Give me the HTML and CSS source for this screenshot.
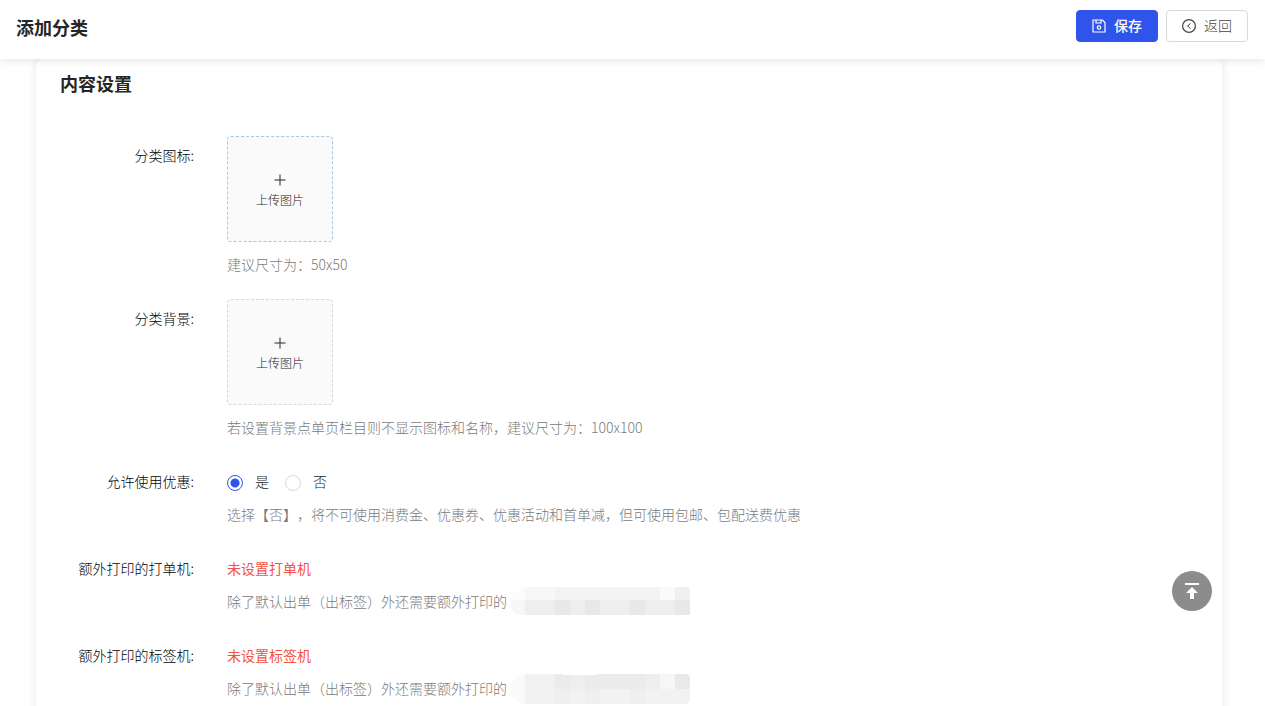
FILE: index.html
```html
<!DOCTYPE html>
<html lang="zh-CN">
<head>
    <meta charset="UTF-8">
    <meta name="viewport" content="width=device-width, initial-scale=1.0">
    <title>添加分类</title>
    <link rel="stylesheet" href="styles.css">
</head>
<body>
    <header class="header">
        <h1>添加分类</h1>
        <div class="actions">
            <button type="submit" form="categoryForm" class="btn btn-primary">
                <svg width="14" height="14" viewBox="0 0 14 14" fill="none" stroke="currentColor" stroke-width="1.200" aria-hidden="true">
                    <path d="M1 1h9.500L13 3.500V13H1zM4 1v3h5V1"/>
                    <circle cx="7" cy="8.500" r="1.700"/>
                </svg>
                <span>保存</span>
            </button>
            <button type="button" class="btn">
                <svg width="14" height="14" viewBox="0 0 14 14" fill="none" stroke="currentColor" aria-hidden="true">
                    <circle cx="7" cy="7" r="6.400" stroke-width="1.200"/>
                    <path d="M8.500 4.500L5.500 7l3 2.500"/>
                </svg>
                <span>返回</span>
            </button>
        </div>
    </header>

    <main class="content">
        <form class="card" id="categoryForm">
            <h2>内容设置</h2>

            <div class="form-item">
                <label class="label" for="iconUpload">分类图标:</label>
                <div class="control">
                    <button type="button" class="upload upload-active" id="iconUpload">
                        <svg width="12" height="12" viewBox="0 0 12 12" stroke="currentColor" aria-hidden="true"><path d="M6 .5v11M.5 6h11"/></svg>
                        <span>上传图片</span>
                    </button>
                    <p class="hint hint-upload">建议尺寸为：50x50</p>
                </div>
            </div>

            <div class="form-item">
                <label class="label" for="bgUpload">分类背景:</label>
                <div class="control">
                    <button type="button" class="upload" id="bgUpload">
                        <svg width="12" height="12" viewBox="0 0 12 12" stroke="currentColor" aria-hidden="true"><path d="M6 .5v11M.5 6h11"/></svg>
                        <span>上传图片</span>
                    </button>
                    <p class="hint hint-upload">若设置背景点单页栏目则不显示图标和名称，建议尺寸为：100x100</p>
                </div>
            </div>

            <div class="form-item">
                <span class="label" id="discountLabel">允许使用优惠:</span>
                <div class="control">
                    <div class="radio-group" role="radiogroup" aria-labelledby="discountLabel">
                        <label class="radio"><input type="radio" name="discount" value="1" checked>是</label>
                        <label class="radio"><input type="radio" name="discount" value="0">否</label>
                    </div>
                    <p class="hint">选择【否】，将不可使用消费金、优惠券、优惠活动和首单减，但可使用包邮、包配送费优惠</p>
                </div>
            </div>

            <div class="form-item">
                <span class="label">额外打印的打单机:</span>
                <div class="control">
                    <div class="warning">未设置打单机</div>
                    <p class="hint">
                        <span>除了默认出单（出标签）外还需要额外打印的</span>
                        <svg class="mosaic" width="180" height="28" viewBox="0 0 180 28" shape-rendering="crispEdges" aria-hidden="true">
                            <path fill="#fcfcfc" d="M15 0v13H0Q3 3 15 0z"/>
                            <path fill="#f7f7f7" d="M0 13h15v15H6Q1 24 0 13z"/>
                            <path fill="#f7f7f7" d="M15 0h30v13H15z"/>
                            <path fill="#f3f3f3" d="M45 0h105v13H45z"/>
                            <path fill="#fafafa" d="M150 0h15v13h-15z"/>
                            <path fill="#f0f0f0" d="M165 0h11l4 1v12h-15z"/>
                            <path fill="#eee" d="M15 13h165v15H15z"/>
                            <path fill="#e8e8e8" d="M45 13h15v15H45zM75 13h15v15H75zM120 13h15v15h-15zM165 13h15v15h-15z"/>
                        </svg>
                    </p>
                </div>
            </div>

            <div class="form-item">
                <span class="label">额外打印的标签机:</span>
                <div class="control">
                    <div class="warning">未设置标签机</div>
                    <p class="hint">
                        <span>除了默认出单（出标签）外还需要额外打印的</span>
                        <svg class="mosaic" width="180" height="32" viewBox="0 -2 180 32" shape-rendering="crispEdges" aria-hidden="true">
                            <path fill="#fafafa" d="M15 0v30Q4 29 1 19V11Q4 2 15 0z"/>
                            <path fill="#f1f1f1" d="M15 0h30v15H15z"/>
                            <path fill="#ebebeb" d="M45 0h7v1h35V0h48v15H45z"/>
                            <path fill="#eee" d="M60 1h15v14H60zM135 0h15v15h-15z"/>
                            <path fill="#f6f6f6" d="M150 0h15v15h-15z"/>
                            <path fill="#e9e9e9" d="M165 0h12l3 2v13h-15z"/>
                            <path fill="#f2f2f2" d="M15 15h165v12l-4 3H15z"/>
                            <path fill="#efefef" d="M45 15h15v15H45zM75 15h15v15H75zM120 15h15v15h-15z"/>
                        </svg>
                    </p>
                </div>
            </div>
        </form>
    </main>

    <button type="button" class="back-top" aria-label="回到顶部">
        <svg width="14" height="16" viewBox="0 0 14 16" fill="currentColor" aria-hidden="true">
            <path d="M0 0h14v2H0zM7 4l6 6H9v6H5v-6H1z"/>
        </svg>
    </button>
</body>
</html>
```

FILE: styles.css
```css
* {
    box-sizing: border-box;
}
body {
    display: flex;
    flex-direction: column;
    height: 100vh;
    margin: 0;
    font-family: "Noto Sans CJK SC", sans-serif;
    font-size: 14px;
    font-weight: 300;
    line-height: 22px;
    text-spacing-trim: space-all;
    color: #000;
    background-color: #fff;
}
h1, h2 {
    margin: 0;
    font-size: 18px;
    font-weight: 700;
    color: #262626;
}
button {
    font-family: inherit;
    font-weight: inherit;
    cursor: pointer;
}
.header {
    position: relative;
    z-index: 2;
    display: flex;
    justify-content: space-between;
    align-items: flex-start;
    padding: 10px 17px 15px 16px;
    background-color: #fff;
    box-shadow: 0 2px 8px rgba(0, 0, 0, 0.1);
}
.header h1 {
    line-height: 34px;
}
.actions {
    display: flex;
    gap: 8px;
}
.btn {
    display: flex;
    align-items: center;
    gap: 8px;
    height: 32px;
    padding: 0 15px;
    font-size: 14px;
    color: #434343;
    background-color: #fff;
    border: 1px solid #d9d9d9;
    border-radius: 4px;
}
.btn span {
    padding-bottom: 2px;
}
.btn-primary {
    font-weight: 500;
    color: #fff;
    background-color: #2f54eb;
    border-color: #2f54eb;
}
.content {
    flex: 1;
    min-height: 0;
    overflow-y: auto;
    scrollbar-width: none;
    padding: 0 43px 24px 36px;
}
.card {
    padding: 13px 24px 24px;
    background-color: #fff;
    border-radius: 6px;
    box-shadow: 0 0 10px rgba(0, 0, 0, 0.1);
}
.card h2 {
    margin-bottom: 42px;
    line-height: 22px;
}
.form-item {
    display: flex;
    gap: 33px;
    margin-bottom: 24px;
}
.label {
    flex: 0 0 134px;
    line-height: 38px;
    text-align: right;
}
.control {
    flex: 1;
}
.upload {
    display: flex;
    flex-direction: column;
    justify-content: center;
    align-items: center;
    gap: 4px;
    width: 106px;
    height: 106px;
    padding: 6px 0 0;
    font-size: 12px;
    line-height: 20px;
    color: #262626;
    background-color: #fafafa;
    border: 1px dashed #d9d9d9;
    border-radius: 4px;
}
.upload-active {
    border-color: #a9c8e8;
}
.hint {
    display: flex;
    align-items: center;
    gap: 3px;
    margin: 0;
    color: #7a7a7a;
}
.hint-upload {
    margin-top: 11px;
}
.radio-group {
    display: flex;
    gap: 16px;
    margin-bottom: 3px;
    line-height: 38px;
}
.radio {
    display: flex;
    align-items: center;
    gap: 12px;
    color: #262626;
}
.radio input {
    appearance: none;
    width: 16px;
    height: 16px;
    margin: 4px 0 0;
    border: 1px solid #d9d9d9;
    border-radius: 50%;
}
.radio input:checked {
    border-color: #2f54eb;
    background: radial-gradient(circle, #2f54eb 4px, #fff 5px);
}
.warning {
    margin-bottom: 3px;
    font-weight: 400;
    line-height: 38px;
    color: #f5533d;
}
.mosaic {
    margin: -5px 0;
}
.back-top {
    position: fixed;
    right: 53px;
    bottom: 95px;
    z-index: 3;
    display: flex;
    justify-content: center;
    align-items: center;
    width: 40px;
    height: 40px;
    padding: 0;
    color: #fff;
    background-color: #8c8c8c;
    border: none;
    border-radius: 50%;
}
```
